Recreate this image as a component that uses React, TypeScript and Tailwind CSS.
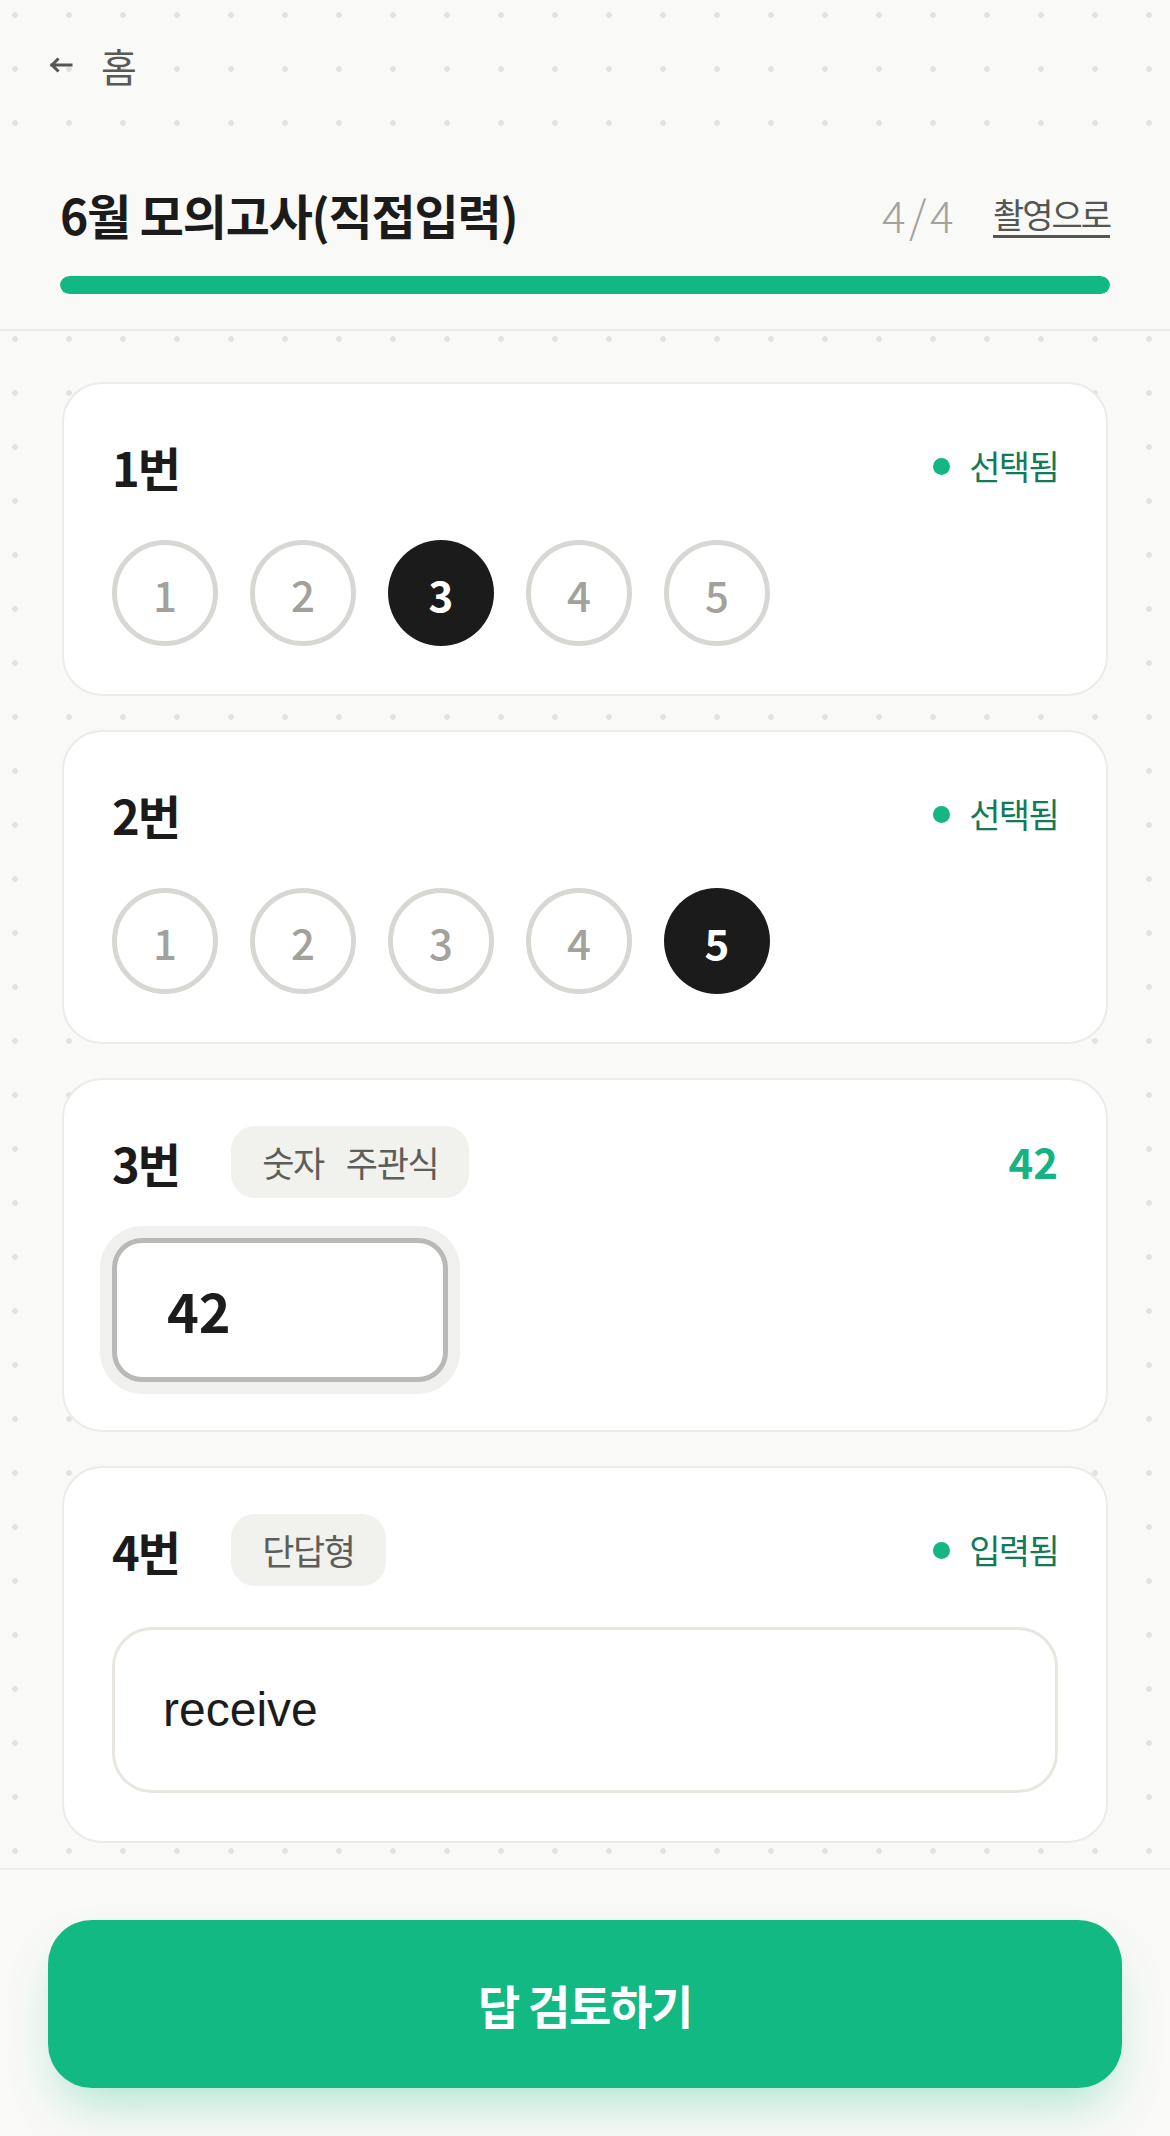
import { useState } from "react";

type Question =
  | { no: number; kind: "choice"; selected: number }
  | { no: number; kind: "number"; badge: string[]; value: string }
  | { no: number; kind: "short"; badge: string[]; value: string };

const QUESTIONS: Question[] = [
  { no: 1, kind: "choice", selected: 3 },
  { no: 2, kind: "choice", selected: 5 },
  { no: 3, kind: "number", badge: ["숫자", "주관식"], value: "42" },
  { no: 4, kind: "short", badge: ["단답형"], value: "receive" },
];

const FONT = "font-['Noto_Sans_CJK_KR','Noto_Sans',sans-serif]";

function Status({ label }: { label: string }) {
  return (
    <span className="flex items-center gap-[19px]">
      <span className="h-[17px] w-[17px] rounded-full bg-[#14b683]" />
      <span className="text-[34px] leading-none tracking-[-0.05em] text-[#137a58]">{label}</span>
    </span>
  );
}

function Badge({ parts }: { parts: string[] }) {
  return (
    <span className="ml-[52px] flex h-[72px] items-center gap-[22px] rounded-[24px] bg-[#f1f1ee] px-[31px] text-[35px] tracking-[-0.04em] text-[#5d5d59]">
      {parts.map((p) => (
        <span key={p}>{p}</span>
      ))}
    </span>
  );
}

function Card({ q }: { q: Question }) {
  const [picked, setPicked] = useState(q.kind === "choice" ? q.selected : 0);

  return (
    <div className="rounded-[40px] border-2 border-[#ebebe8] bg-white px-[48px] pb-[48px] pt-[46px]">
      <div className="flex h-[72px] items-center">
        <span className="text-[47px] font-bold leading-none tracking-[-0.04em] text-[#1b1b1b]">{q.no}번</span>
        {q.kind !== "choice" && <Badge parts={q.badge} />}
        <span className="ml-auto">
          {q.kind === "choice" && <Status label="선택됨" />}
          {q.kind === "number" && (
            <span className="text-[42px] font-bold leading-none text-[#15b384]">{q.value}</span>
          )}
          {q.kind === "short" && <Status label="입력됨" />}
        </span>
      </div>

      {q.kind === "choice" && (
        <div className="mt-[38px] flex gap-[32px]">
          {[1, 2, 3, 4, 5].map((n) => (
            <button
              key={n}
              type="button"
              onClick={() => setPicked(n)}
              className={
                n === picked
                  ? "flex h-[106px] w-[106px] items-center justify-center rounded-full bg-[#1b1b1b] text-[42px] font-bold text-white"
                  : "flex h-[106px] w-[106px] items-center justify-center rounded-full border-[5px] border-[#d7d7d3] bg-white text-[42px] font-medium text-[#a2a19c]"
              }
            >
              {n}
            </button>
          ))}
        </div>
      )}

      {q.kind === "number" && (
        <div className="mt-[40px] flex h-[144px] w-[336px] items-center rounded-[30px] border-[5px] border-[#b9b9b8] bg-white pl-[50px] ring-[12px] ring-[#f0f0ee]">
          <span className="text-[54px] font-bold leading-none text-[#1c1c1c]">{q.value}</span>
        </div>
      )}

      {q.kind === "short" && (
        <div className="mt-[41px] flex h-[166px] items-center rounded-[40px] border-[3px] border-[#e8e6df] bg-white pl-[48px]">
          <span className="font-['Liberation_Sans',Arial,sans-serif] text-[48px] leading-none text-[#1c1c1c]">
            {q.value}
          </span>
        </div>
      )}
    </div>
  );
}

export default function App() {
  return (
    <div
      className={`${FONT} flex min-h-[2136px] w-full flex-col bg-[#f9f9f7] bg-[radial-gradient(circle,#e2e2de_2.5px,transparent_3.2px)] bg-size-[54px_54px] bg-position-[-12px_-12px]`}
    >
      {/* back link */}
      <div className="flex h-[140px] items-start pl-[49px] pt-[40px]">
        <button type="button" className="flex h-[50px] items-center gap-[28px] text-[39px] leading-none text-[#585855]">
          <svg width="24" height="16" viewBox="0 0 24 16" fill="none" stroke="#555552" strokeWidth="3" strokeLinecap="square">
            <path d="M22 8H3" />
            <path d="M8.5 2.5L3 8l5.5 5.5" />
          </svg>
          <span>홈</span>
        </button>
      </div>

      {/* title + progress */}
      <div className="border-b-2 border-[#ecebe8] bg-[#f9f9f7] px-[60px] pb-[35px] pt-[42px]">
        <div className="flex h-[64px] items-center">
          <h1 className="text-[48px] font-bold leading-none tracking-[-0.025em] text-[#1b1b1b]">6월 모의고사(직접입력)</h1>
          <span className="ml-auto text-[44px] font-light leading-none tracking-[0.08em] text-[#a3a39e]">4/4</span>
          <button
            type="button"
            className="ml-[36px] text-[34px] leading-none tracking-[-0.06em] text-[#555552] underline decoration-[3px] underline-offset-[7px]"
          >
            촬영으로
          </button>
        </div>
        <div className="mt-[30px] h-[18px] w-full overflow-hidden rounded-full bg-[#e6e6e2]">
          <div className="h-full w-full rounded-full bg-[#12b883]" />
        </div>
      </div>

      {/* questions */}
      <main className="flex flex-1 flex-col gap-[34px] px-[62px] pb-[25px] pt-[51px]">
        {QUESTIONS.map((q) => (
          <Card key={q.no} q={q} />
        ))}
      </main>

      {/* footer */}
      <div className="border-t-2 border-[#ecebe8] bg-[#f9f9f7] px-[48px] pb-[48px] pt-[50px]">
        <button
          type="button"
          className="flex h-[168px] w-full items-center justify-center rounded-[44px] bg-[#12b982] text-[46px] font-bold tracking-[-0.03em] text-white shadow-[0_26px_50px_-14px_rgba(18,185,130,0.35)]"
        >
          답 검토하기
        </button>
      </div>
    </div>
  );
}
